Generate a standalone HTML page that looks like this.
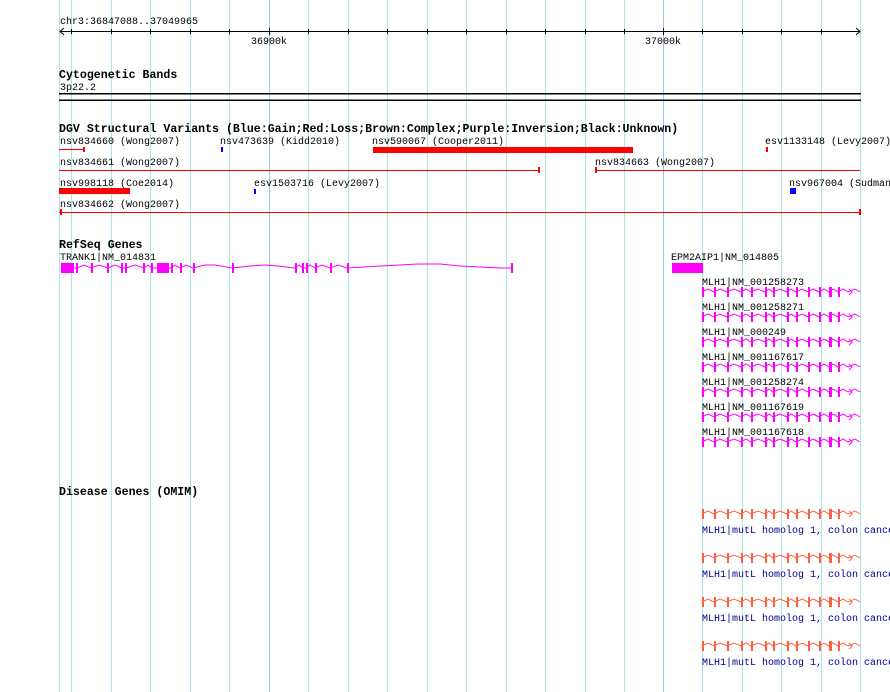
<!DOCTYPE html>
<html><head><meta charset="utf-8"><style>
html,body{margin:0;padding:0;background:#fff;}
svg{display:block;}
text{font-family:"Liberation Mono",monospace;font-size:10px;fill:#000;}
.h{font-weight:bold;font-size:11.6px;}
.o{fill:#000090;}
</style></head><body>
<svg width="890" height="692" viewBox="0 0 890 692">
<defs>
<g id="mlh" stroke="#ff00ff" fill="none" stroke-width="1">
<path d="M702,0 L708,-3 L714,0 L720,-3 L727,0 L734,-3 L741,0 L746,-3 L751,0 L758,-3 L765,0 L769,-3 L773,0 L780,-3 L787,0 L791,-3 L796,0 L802,-3 L808,0 L813,-3 L819,0 L824,-3 L829,0 L833,-3 L838,0 L843,-3 L848,0 L855,-3 L860,0 M849,-3 L852,0 L849,3"/>
<g fill="#ff00ff" stroke="none">
<rect x="702" y="-5" width="2" height="10"/><rect x="714" y="-5" width="2" height="10"/><rect x="727" y="-5" width="2" height="10"/><rect x="741" y="-5" width="2" height="10"/><rect x="751" y="-5" width="2" height="10"/><rect x="765" y="-5" width="2" height="10"/><rect x="773" y="-5" width="2" height="10"/><rect x="787" y="-5" width="2" height="10"/><rect x="796" y="-5" width="2" height="10"/><rect x="808" y="-5" width="2" height="10"/><rect x="819" y="-5" width="2" height="10"/><rect x="829" y="-5" width="3" height="10"/><rect x="838" y="-5" width="2" height="10"/>
</g></g>
<g id="om" stroke="#ff6040" fill="none" stroke-width="1">
<path d="M702,0 L708,-3 L714,0 L720,-3 L727,0 L734,-3 L741,0 L746,-3 L751,0 L758,-3 L765,0 L769,-3 L773,0 L780,-3 L787,0 L791,-3 L796,0 L802,-3 L808,0 L813,-3 L819,0 L824,-3 L829,0 L833,-3 L838,0 L843,-3 L848,0 L855,-3 L860,0 M849,-3 L852,0 L849,3"/>
<g fill="#ff6040" stroke="none">
<rect x="702" y="-5" width="2" height="10"/><rect x="714" y="-5" width="2" height="10"/><rect x="727" y="-5" width="2" height="10"/><rect x="741" y="-5" width="2" height="10"/><rect x="751" y="-5" width="2" height="10"/><rect x="765" y="-5" width="2" height="10"/><rect x="773" y="-5" width="2" height="10"/><rect x="787" y="-5" width="2" height="10"/><rect x="796" y="-5" width="2" height="10"/><rect x="808" y="-5" width="2" height="10"/><rect x="819" y="-5" width="2" height="10"/><rect x="829" y="-5" width="3" height="10"/><rect x="838" y="-5" width="2" height="10"/>
</g></g>
</defs>
<g stroke="#a8e6ec" stroke-width="1">
<line x1="59.5" y1="0" x2="59.5" y2="692"/><line x1="71.5" y1="0" x2="71.5" y2="692"/><line x1="111.5" y1="0" x2="111.5" y2="692"/><line x1="150.5" y1="0" x2="150.5" y2="692"/><line x1="190.5" y1="0" x2="190.5" y2="692"/><line x1="229.5" y1="0" x2="229.5" y2="692"/><line x1="308.5" y1="0" x2="308.5" y2="692"/><line x1="348.5" y1="0" x2="348.5" y2="692"/><line x1="387.5" y1="0" x2="387.5" y2="692"/><line x1="427.5" y1="0" x2="427.5" y2="692"/><line x1="466.5" y1="0" x2="466.5" y2="692"/><line x1="506.5" y1="0" x2="506.5" y2="692"/><line x1="545.5" y1="0" x2="545.5" y2="692"/><line x1="585.5" y1="0" x2="585.5" y2="692"/><line x1="624.5" y1="0" x2="624.5" y2="692"/><line x1="702.5" y1="0" x2="702.5" y2="692"/><line x1="742.5" y1="0" x2="742.5" y2="692"/><line x1="781.5" y1="0" x2="781.5" y2="692"/><line x1="821.5" y1="0" x2="821.5" y2="692"/><line x1="860.5" y1="0" x2="860.5" y2="692"/>
</g>
<g stroke="#a0c4e4"><line x1="269.5" y1="0" x2="269.5" y2="692"/><line x1="663.5" y1="0" x2="663.5" y2="692"/></g>

<text x="60" y="24">chr3:36847088..37049965</text>
<g stroke="#000" stroke-width="1">
<line x1="60" y1="31.5" x2="860" y2="31.5"/>
<path d="M64,28 L60,31.5 L64,35 M856,28 L860,31.5 L856,35" fill="none"/>
<path d="M71.5,29 V34 M111.5,29 V34 M150.5,29 V34 M190.5,29 V34 M229.5,29 V34 M269.5,28 V35 M308.5,29 V34 M348.5,29 V34 M387.5,29 V34 M427.5,29 V34 M466.5,29 V34 M506.5,29 V34 M545.5,29 V34 M585.5,29 V34 M624.5,29 V34 M663.5,28 V35 M702.5,29 V34 M742.5,29 V34 M781.5,29 V34 M821.5,29 V34"/>
</g>
<text x="251" y="44">36900k</text>
<text x="645" y="44">37000k</text>

<text class="h" x="59" y="78">Cytogenetic Bands</text>
<text x="60" y="90">3p22.2</text>
<rect x="59" y="93" width="802" height="1.5" fill="#000"/>
<rect x="59" y="99.5" width="802" height="1.5" fill="#000"/>

<text class="h" x="59" y="132">DGV Structural Variants (Blue:Gain;Red:Loss;Brown:Complex;Purple:Inversion;Black:Unknown)</text>
<text x="60" y="144">nsv834660 (Wong2007)</text>
<text x="220" y="144">nsv473639 (Kidd2010)</text>
<text x="372" y="144">nsv590067 (Cooper2011)</text>
<text x="765" y="144">esv1133148 (Levy2007)</text>
<g fill="#f00">
<rect x="59" y="149" width="25" height="1"/><rect x="83" y="147" width="2" height="5"/>
<rect x="373" y="147" width="260" height="6"/>
<rect x="766" y="147" width="2" height="5"/>
<rect x="59" y="170" width="480" height="1"/><rect x="538" y="167" width="2" height="6"/>
<rect x="596" y="170" width="264" height="1"/><rect x="595" y="167" width="2" height="6"/>
<rect x="59" y="188" width="71" height="6"/>
<rect x="59" y="212" width="802" height="1"/><rect x="60" y="209" width="2" height="6"/><rect x="859" y="209" width="2" height="6"/>
</g>
<g fill="#00f">
<rect x="221" y="147" width="2" height="5"/>
<rect x="254" y="189" width="2" height="5"/>
<rect x="790" y="188" width="6" height="6"/>
</g>
<text x="60" y="165">nsv834661 (Wong2007)</text>
<text x="595" y="165">nsv834663 (Wong2007)</text>
<text x="60" y="186">nsv998118 (Coe2014)</text>
<text x="254" y="186">esv1503716 (Levy2007)</text>
<text x="789" y="186">nsv967004 (Sudmant2013)</text>
<text x="60" y="207">nsv834662 (Wong2007)</text>

<text class="h" x="59" y="248">RefSeq Genes</text>
<text x="60" y="260">TRANK1|NM_014831</text>
<g stroke="#ff00ff" fill="none">
<path d="M61,268 L73,268 L77,268 L84,265 L91,268 L99,265 L108,268 L115,265 L122,268 L126,268 L135,265 L144,268 L148,265 L152,268 L157,268 M168,268 L171,268 L175,265 L180,268 L186,265 L193,268 L205,265 L215,265 L232,268 L250,266 L265,265 L278,266 L295,268 L299,265 L303,268 L306,268 L310,265 L315,268 L322,265 L330,268 L338,265 L347,268 L380,266 L418,264 L440,264 L460,266 L500,268 L512,268"/>
</g>
<g fill="#ff00ff">
<rect x="61" y="263" width="13" height="10"/><rect x="157" y="263" width="12" height="10"/>
<rect x="76" y="263" width="2" height="10"/><rect x="91" y="263" width="2" height="10"/><rect x="107" y="263" width="2" height="10"/><rect x="121" y="263" width="2" height="10"/><rect x="125" y="263" width="2" height="10"/><rect x="143" y="263" width="2" height="10"/><rect x="151" y="263" width="2" height="10"/><rect x="171" y="263" width="2" height="10"/><rect x="180" y="263" width="2" height="10"/><rect x="193" y="263" width="2" height="10"/><rect x="232" y="263" width="2" height="10"/><rect x="295" y="263" width="2" height="10"/><rect x="302" y="263" width="2" height="10"/><rect x="306" y="263" width="2" height="10"/><rect x="315" y="263" width="2" height="10"/><rect x="330" y="263" width="2" height="10"/><rect x="347" y="263" width="2" height="10"/><rect x="511" y="263" width="2" height="10"/>
<rect x="672" y="263" width="31" height="10"/>
</g>
<text x="671" y="260">EPM2AIP1|NM_014805</text>

<text x="702" y="285">MLH1|NM_001258273</text><use href="#mlh" transform="translate(0,292)"/>
<text x="702" y="310">MLH1|NM_001258271</text><use href="#mlh" transform="translate(0,317)"/>
<text x="702" y="335">MLH1|NM_000249</text><use href="#mlh" transform="translate(0,342)"/>
<text x="702" y="360">MLH1|NM_001167617</text><use href="#mlh" transform="translate(0,367)"/>
<text x="702" y="385">MLH1|NM_001258274</text><use href="#mlh" transform="translate(0,392)"/>
<text x="702" y="410">MLH1|NM_001167619</text><use href="#mlh" transform="translate(0,417)"/>
<text x="702" y="435">MLH1|NM_001167618</text><use href="#mlh" transform="translate(0,442)"/>

<text class="h" x="59" y="495">Disease Genes (OMIM)</text>
<use href="#om" transform="translate(0,514)"/><text class="o" x="702" y="533">MLH1|mutL homolog 1, colon cancer</text>
<use href="#om" transform="translate(0,558)"/><text class="o" x="702" y="577">MLH1|mutL homolog 1, colon cancer</text>
<use href="#om" transform="translate(0,602)"/><text class="o" x="702" y="621">MLH1|mutL homolog 1, colon cancer</text>
<use href="#om" transform="translate(0,646)"/><text class="o" x="702" y="665">MLH1|mutL homolog 1, colon cancer</text>
</svg>
</body></html>
